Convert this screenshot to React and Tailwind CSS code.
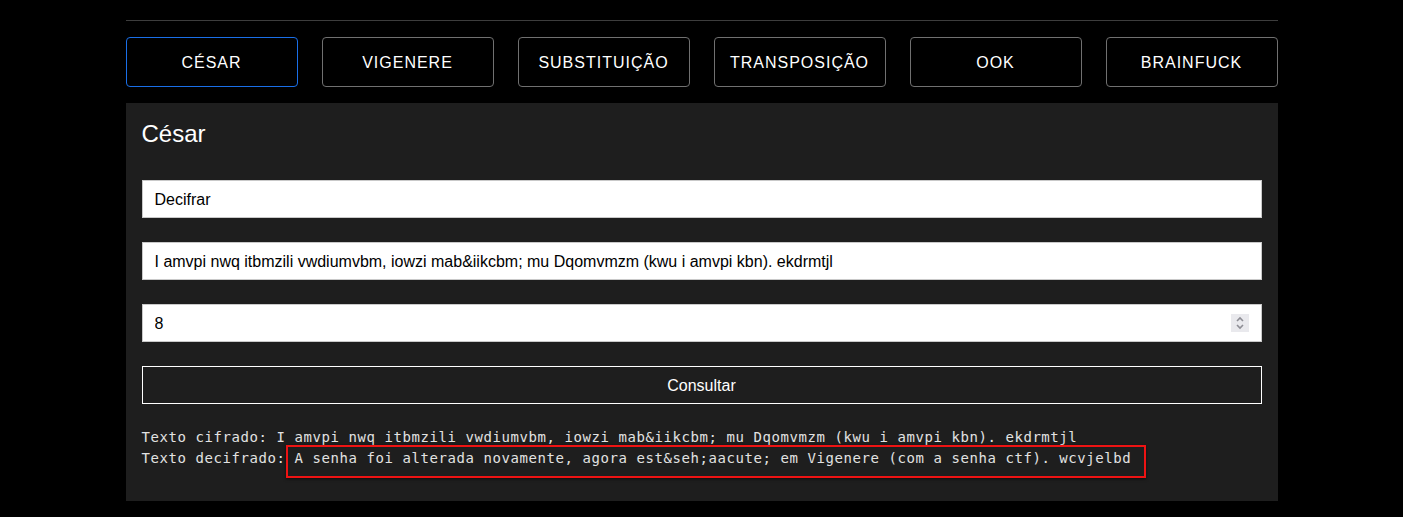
import React, { useState } from 'react';

const ciphers = ['César', 'Vigenere', 'Substituição', 'Transposição', 'Ook', 'Brainfuck'];

const cifrado = 'I amvpi nwq itbmzili vwdiumvbm, iowzi mab&iikcbm; mu Dqomvmzm (kwu i amvpi kbn). ekdrmtjl';
const decifrado = 'A senha foi alterada novamente, agora est&seh;aacute; em Vigenere (com a senha ctf). wcvjelbd';

const App = () => {
    const [active, setActive] = useState('César');
    const [mode, setMode] = useState('Decifrar');
    const [text, setText] = useState(cifrado);
    const [key, setKey] = useState('8');

    return (
        <div className="min-h-screen bg-black font-['Liberation_Sans',Arial,sans-serif]">
            <div className="w-[1152px] mx-auto pt-5">
                <div className="border-t border-[#3d3d3d]" />

                {/* cipher tabs */}
                <div className="grid grid-cols-6 gap-6 mt-4">
                    {ciphers.map(name => (
                        <button
                            key={name}
                            onClick={() => setActive(name)}
                            className={`h-[50px] pt-[2px] rounded-[4px] border bg-black text-white text-base uppercase tracking-[1px] ${active === name ? 'border-[#1a6fe8]' : 'border-[#707070]'}`}
                        >
                            {name}
                        </button>
                    ))}
                </div>

                <div className="mt-4 bg-[#1e1e1e] px-4 pt-4 pb-[32px]">
                    <h2 className="text-white text-2xl leading-8 -mt-[1px]">César</h2>

                    <div className="mt-[30px] flex flex-col gap-6">
                        <input
                            value={mode}
                            onChange={e => setMode(e.target.value)}
                            className="h-[38px] w-full bg-white border border-[#c9c9c9] px-3 pt-[2px] text-base text-black outline-none"
                        />
                        <input
                            value={text}
                            onChange={e => setText(e.target.value)}
                            className="h-[38px] w-full bg-white border border-[#c9c9c9] px-3 pt-[2px] text-base text-black outline-none"
                        />
                        <div className="relative">
                            <input
                                value={key}
                                onChange={e => setKey(e.target.value)}
                                className="h-[38px] w-full bg-white border border-[#c9c9c9] px-3 pt-[2px] text-base text-black outline-none"
                            />
                            <div className="absolute right-[13px] top-[10px] w-[18px] h-[18px] bg-[#e9e9ed] flex items-center justify-center">
                                <svg width="10" height="14" viewBox="0 0 10 14" fill="none" stroke="#8d8d95" strokeWidth="1.6">
                                    <path d="M2 5 L5 2 L8 5" />
                                    <path d="M2 9 L5 12 L8 9" />
                                </svg>
                            </div>
                        </div>
                        <button className="h-[38px] w-full pt-[2px] border border-white text-white text-base">
                            Consultar
                        </button>
                    </div>

                    <div className="mt-[23px] font-['DejaVu_Sans_Mono',monospace] text-[14px] leading-[21px] tracking-[0.57px] text-[#e2e2e2] whitespace-pre">
                        <div>Texto cifrado: {cifrado}</div>
                        <div>
                            Texto decifrado: <span className="relative inline-block">
                                {decifrado}
                                <span className="absolute -left-[8px] -right-[15px] -top-[3px] -bottom-[9px] border-2 border-[#ee1313] shadow-[0_1px_3px_rgba(0,0,0,0.6)]" />
                            </span>
                        </div>
                    </div>
                </div>
            </div>
        </div>
    );
};

export default App;
